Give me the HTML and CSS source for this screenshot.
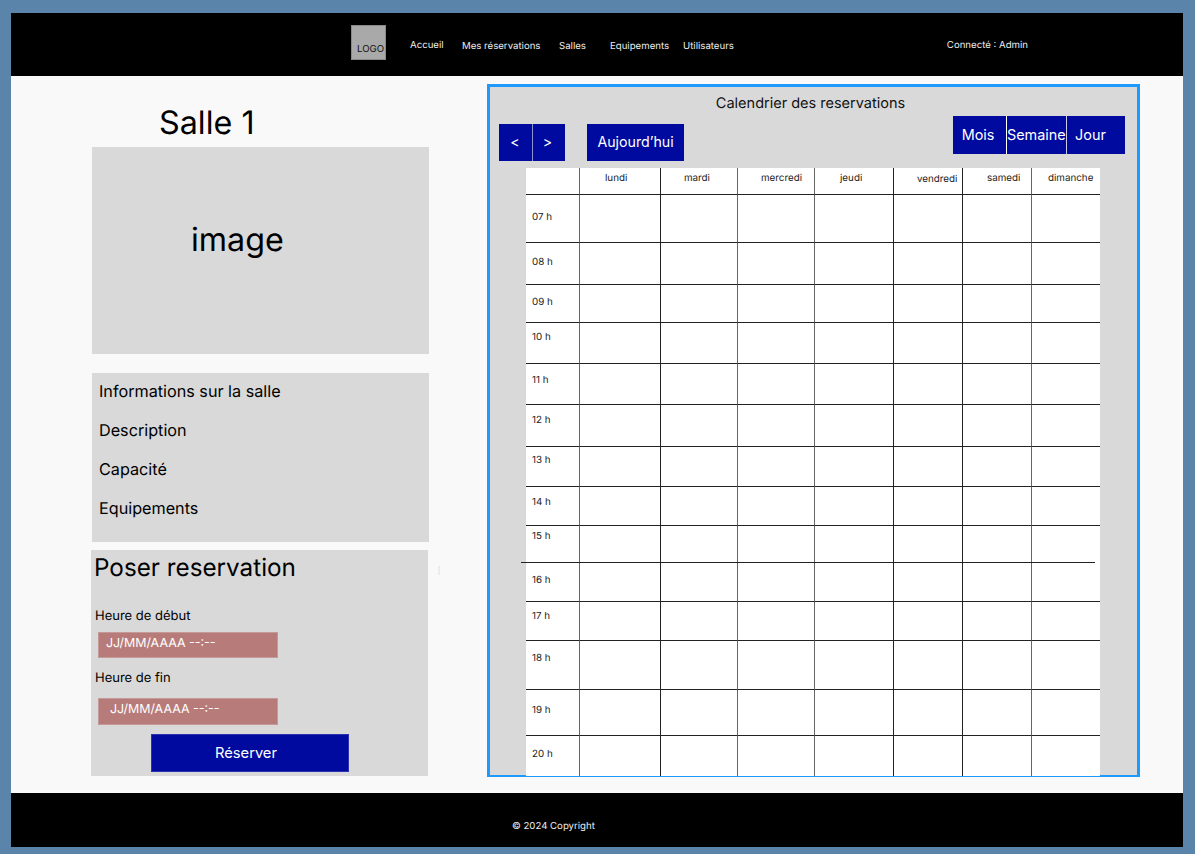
FILE: index.html
```html
<!DOCTYPE html>
<html lang="fr">
<head>
<meta charset="utf-8">
<title>Salle 1</title>
<link rel="stylesheet" href="styles.css">
</head>
<body>
<div class="frame">
  <header class="topbar">
    <div class="logo">LOGO</div>
    <nav class="nav">
      <a class="nav-accueil">Accueil</a>
      <a class="nav-resa">Mes réservations</a>
      <a class="nav-salles">Salles</a>
      <a class="nav-equip">Equipements</a>
      <a class="nav-users">Utilisateurs</a>
    </nav>
    <span class="user">Connecté : Admin</span>
  </header>
  <main class="main">
    <section class="left">
      <h1 class="room-title">Salle 1</h1>
      <div class="image-box">image</div>
      <div class="info-box">
        <p>Informations sur la salle</p>
        <p>Description</p>
        <p>Capacité</p>
        <p>Equipements</p>
      </div>
      <form class="booking">
        <h2>Poser reservation</h2>
        <div class="label label-start">Heure de début</div>
        <div class="date-field date-start">JJ/MM/AAAA --:--</div>
        <div class="label label-end">Heure de fin</div>
        <div class="date-field date-end">JJ/MM/AAAA --:--</div>
        <button type="button" class="book-btn">Réserver</button>
      </form>
      <span class="stray-mark"></span>
    </section>
    <section class="calendar">
      <div class="cal-title">Calendrier des reservations</div>
      <div class="toolbar">
        <div class="tools-left">
          <button type="button" class="tb tb-prev">&lt;</button>
          <button type="button" class="tb tb-next">&gt;</button>
          <button type="button" class="tb tb-today">Aujourd’hui</button>
        </div>
        <div class="tools-right">
          <button type="button" class="tb tb-month">Mois</button>
          <button type="button" class="tb tb-week">Semaine</button>
          <button type="button" class="tb tb-day">Jour</button>
        </div>
      </div>
      <div class="table-wrap">
        <table class="grid">
          <colgroup>
            <col class="c0"><col class="c1"><col class="c2"><col class="c2"><col class="c3"><col class="c4"><col class="c4"><col class="c4">
          </colgroup>
          <thead>
            <tr class="head"><th></th><th class="d-lun">lundi</th><th class="d-mar">mardi</th><th class="d-mer">mercredi</th><th class="d-jeu">jeudi</th><th class="d-ven">vendredi</th><th class="d-sam">samedi</th><th class="d-dim">dimanche</th></tr>
          </thead>
          <tbody>
            <tr class="r07"><th>07 h</th><td></td><td></td><td></td><td></td><td></td><td></td><td></td></tr>
            <tr class="r08"><th>08 h</th><td></td><td></td><td></td><td></td><td></td><td></td><td></td></tr>
            <tr class="r09"><th>09 h</th><td></td><td></td><td></td><td></td><td></td><td></td><td></td></tr>
            <tr class="r10"><th>10 h</th><td></td><td></td><td></td><td></td><td></td><td></td><td></td></tr>
            <tr class="r11"><th>11 h</th><td></td><td></td><td></td><td></td><td></td><td></td><td></td></tr>
            <tr class="r12"><th>12 h</th><td></td><td></td><td></td><td></td><td></td><td></td><td></td></tr>
            <tr class="r13"><th>13 h</th><td></td><td></td><td></td><td></td><td></td><td></td><td></td></tr>
            <tr class="r14"><th>14 h</th><td></td><td></td><td></td><td></td><td></td><td></td><td></td></tr>
            <tr class="r15"><th>15 h</th><td></td><td></td><td></td><td></td><td></td><td></td><td></td></tr>
            <tr class="r16"><th>16 h</th><td></td><td></td><td></td><td></td><td></td><td></td><td></td></tr>
            <tr class="r17"><th>17 h</th><td></td><td></td><td></td><td></td><td></td><td></td><td></td></tr>
            <tr class="r18"><th>18 h</th><td></td><td></td><td></td><td></td><td></td><td></td><td></td></tr>
            <tr class="r19"><th>19 h</th><td></td><td></td><td></td><td></td><td></td><td></td><td></td></tr>
            <tr class="r20"><th>20 h</th><td></td><td></td><td></td><td></td><td></td><td></td><td></td></tr>
          </tbody>
        </table>
        <span class="offset-line"></span>
      </div>
    </section>
  </main>
  <footer class="footer">© 2024 Copyright</footer>
</div>
</body>
</html>
```

FILE: styles.css
```css
* { box-sizing: border-box; }
html, body { margin: 0; height: 100%; }
body {
  background: #5a84aa;
  padding: 13px 12px 7px 11px;
  height: 854px;
  overflow: hidden;
  font-family: Inter, "Noto Sans", sans-serif;
  text-rendering: geometricPrecision;
  color: #000;
}
.frame { display: flex; flex-direction: column; height: 100%; background: #f9f9f9; }

/* header */
.topbar {
  height: 63px;
  flex: none;
  background: #000;
  color: #eee;
  display: flex;
  align-items: center;
  padding-left: 340px;
  font-size: 9.65px;
  line-height: 12px;
  position: relative;
}
.logo {
  width: 35px;
  height: 35px;
  margin-top: -4px;
  background: #a9a9a9;
  border: 1px solid #8a8a8a;
  color: #111;
  font-size: 9.65px;
  line-height: 12px;
  padding: 18px 0 0 5px;
}
.nav { display: flex; margin: 4px 0 0 24px; }
.nav a { display: block; white-space: nowrap; }
.nav-accueil { width: 52px; margin-top: -1px; }
.nav-resa { width: 97px; }
.nav-salles { width: 51px; }
.nav-equip { width: 73px; }
.user { margin: 2px 0 0 213px; }

/* main */
.main { flex: 1; display: flex; align-items: flex-start; padding: 8px 0 0 81px; min-height: 0; }
.left { width: 337px; flex: none; position: relative; }
.room-title { margin: 0; height: 63px; padding: 19px 0 0 67px; font-size: 32.3px; line-height: 40px; font-weight: 400; }
.image-box {
  height: 207px;
  background: #d9d9d9;
  font-size: 32.3px;
  line-height: 40px;
  padding: 73px 0 0 99px;
}
.info-box {
  height: 169px;
  margin-top: 19px;
  background: #d9d9d9;
  padding: 8px 0 0 7px;
  font-size: 16.2px;
  line-height: 20px;
}
.info-box p { margin: 0 0 19px; }
.booking { display: block; height: 226px; margin: 8px 1px 0 -1px; background: #d9d9d9; padding: 3px 0 0 3px; position: relative; }
.booking h2 { margin: 0; font-size: 24.25px; line-height: 30px; font-weight: 400; }
.label { font-size: 13px; line-height: 17px; padding-left: 1px; }
.label-start { margin-top: 25px; }
.label-end { margin-top: 12px; }
.date-field {
  width: 180px;
  height: 26px;
  margin: 7px 0 0 4px;
  background: #b77c7a;
  border: 1px solid #c39a98;
  color: #fff;
  font-size: 12.45px;
  line-height: 16px;
}
.date-start { padding: 3px 0 0 7px; }
.date-end { margin-top: 11px; height: 27px; padding: 3px 0 0 11px; }
.book-btn {
  display: block;
  width: 198px;
  height: 38px;
  margin: 9px 0 0 57px;
  background: #000a9f;
  border: 1px solid #2a33ad;
  color: #fff;
  font: 400 14.7px/17px Inter, "Noto Sans", sans-serif;
  padding: 0 8px 0 0;
}
.stray-mark { position: absolute; left: 346px; top: 482px; width: 2px; height: 9px; background: #ececec; }

/* calendar */
.calendar {
  width: 653px;
  height: 693px;
  flex: none;
  margin-left: 58px;
  background: #d9d9d9;
  border: 3px solid #1e9bfa;
  border-bottom-width: 2px;
  padding-top: 8px;
}
.cal-title { height: 21px; text-align: center; padding-right: 6px; font-size: 14.5px; line-height: 17px; color: #111; }
.toolbar { display: flex; justify-content: space-between; height: 52px; padding: 0 12px 0 9px; }
.tools-left { display: flex; padding-top: 8px; }
.tools-right { display: flex; }
.tb {
  background: #000a9f;
  color: #fff;
  border: 0;
  padding: 0;
  font: 400 14.2px/17px Inter, "Noto Sans", sans-serif;
  white-space: nowrap;
}
.tb-prev, .tb-next, .tb-today { height: 37px; padding-bottom: 3px; }
.tb-prev { width: 34px; border-right: 1px solid #8f93cf; padding-right: 1px; }
.tb-next { width: 32px; padding-right: 3px; }
.tb-today { width: 97px; margin-left: 22px; }
.tb-month, .tb-week, .tb-day { height: 38px; padding-bottom: 2px; font-size: 14.4px; }
.tb-month { width: 54px; border-right: 1px solid #fff; padding-right: 3px; }
.tb-week { width: 60px; border-right: 1px solid #c8cae8; padding-right: 1px; }
.tb-day { width: 58px; padding-right: 11px; }

.table-wrap { position: relative; margin-left: 36px; width: 574px; }
.grid {
  table-layout: fixed;
  border-collapse: separate;
  border-spacing: 0;
  width: 574px;
  background: #fff;
  font-size: 9.8px;
  line-height: 12px;
  color: #222;
}
.c0 { width: 53px; }
.c1 { width: 81px; }
.c2 { width: 77px; }
.c3 { width: 79px; }
.c4 { width: 69px; }
.grid th, .grid td { padding: 0; font-weight: 400; text-align: left; vertical-align: top; border-left: 1px solid #222; border-top: 1px solid #222; }
.grid tr > :first-child { border-left: 0; }
.grid tr > :nth-child(2), .grid tr > :nth-child(4), .grid tr > :nth-child(5), .grid tr > :nth-child(8) { border-left-color: #666; }
.grid thead th { border-top: 0; padding-top: 5px; }
.grid tbody th { padding-left: 6px; }
.head { height: 26px; }
.d-lun { padding-left: 25px !important; }
.d-mar { padding-left: 23px !important; }
.d-mer { padding-left: 23px !important; }
.d-jeu { padding: 5px 0 0 25px !important; }
.d-ven { padding: 6px 0 0 23px !important; }
.d-sam { padding: 5px 0 0 24px !important; }
.d-dim { padding-left: 16px !important; }

.r07 { height: 48px; } .r07 th { padding-top: 17px; }
.r08 { height: 42px; } .r08 th { padding-top: 14px; }
.r09 { height: 38px; } .r09 th { padding-top: 12px; }
.r10 { height: 41px; } .r10 th { padding-top: 9px; }
.r11 { height: 41px; } .r11 th { padding-top: 11px; }
.r12 { height: 42px; } .r12 th { padding-top: 10px; }
.r13 { height: 40px; } .r13 th { padding-top: 8px; }
.r14 { height: 39px; } .r14 th { padding-top: 10px; }
.r15 { height: 37px; } .r15 th { padding-top: 5px; }
.r16 { height: 39px; } .r16 th { padding-top: 12px; }
.r17 { height: 39px; } .r17 th { padding-top: 9px; }
.r18 { height: 49px; } .r18 th { padding-top: 12px; }
.r19 { height: 46px; } .r19 th { padding-top: 15px; }
.r20 { height: 41px; } .r20 th { padding-top: 13px; }
.grid .r16 th, .grid .r16 td { border-top-color: transparent; }

.offset-line { position: absolute; left: -5px; top: 394px; width: 574px; height: 1px; background: #222; }

/* footer */
.footer {
  height: 54px;
  flex: none;
  background: #000;
  color: #eee;
  font-size: 9.65px;
  line-height: 12px;
  padding: 28px 0 0 501px;
}
```
